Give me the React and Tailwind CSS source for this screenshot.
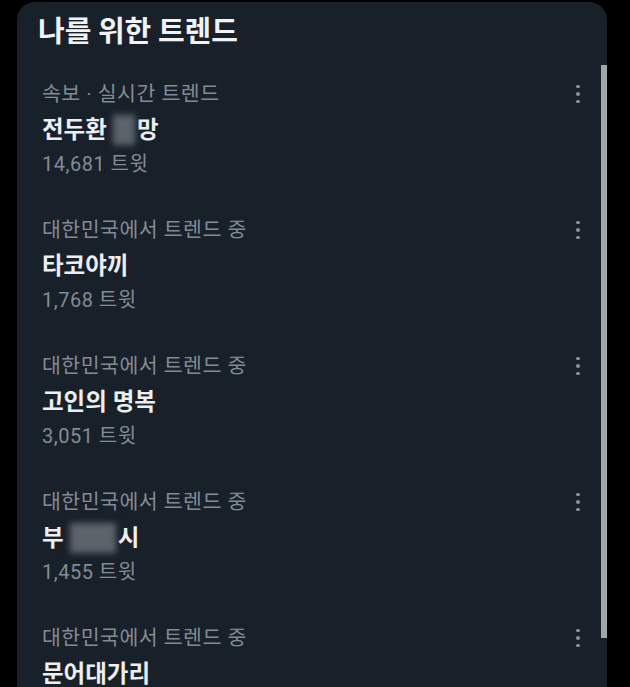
import React from 'react';

const trends = [
  { category: '속보 · 실시간 트렌드', name: ['전두환', { blur: 22 }, '망'], count: '14,681 트윗' },
  { category: '대한민국에서 트렌드 중', name: ['타코야끼'], count: '1,768 트윗' },
  { category: '대한민국에서 트렌드 중', name: ['고인의 명복'], count: '3,051 트윗' },
  { category: '대한민국에서 트렌드 중', name: ['부', { blur: 46 }, '시'], count: '1,455 트윗' },
  { category: '대한민국에서 트렌드 중', name: ['문어대가리'], count: '2,210 트윗' },
];

const Dots = () => (
  <div className="flex flex-col gap-[4px] w-[4px] items-center">
    <span className="block w-[3.5px] h-[3.5px] rounded-full bg-[#8a939c]" />
    <span className="block w-[3.5px] h-[3.5px] rounded-full bg-[#8a939c]" />
    <span className="block w-[3.5px] h-[3.5px] rounded-full bg-[#8a939c]" />
  </div>
);

const TrendItem = ({ trend }) => (
  <div className="pt-[35px] pb-[7px]">
    <div className="flex items-center justify-between h-[24px]">
      <span className="text-[20.5px] leading-[24px] tracking-[0.5px] text-[#838c95]">{trend.category}</span>
      <Dots />
    </div>
    <div className="mt-[10px] h-[28px] flex items-center text-[23.5px] leading-[28px] font-bold text-[#eceef0]">
      {trend.name.map((part, i) =>
        typeof part === 'string' ? (
          <span key={i}>{part}</span>
        ) : (
          <span
            key={i}
            className="inline-block h-[30px] bg-[#5d636b] blur-[3px] ml-[6px] mr-[2px]"
            style={{ width: part.blur }}
          />
        )
      )}
    </div>
    <div className="mt-[8px] text-[20px] leading-[24px] tracking-[0.5px] text-[#838c95]">{trend.count}</div>
  </div>
);

export default function App() {
  return (
    <div
      className="w-[630px] h-[687px] bg-black overflow-hidden"
      style={{ fontFamily: 'Roboto, "Noto Sans CJK KR", sans-serif' }}
    >
      <div className="relative ml-[17px] mt-[2px] w-[590px] h-[700px] bg-[#18202a] rounded-t-[18px]">
        <h1
          className="pt-[9px] pl-[21px] text-[29px] leading-[36px] font-bold text-[#f0f2f4]"
          style={{ fontFamily: '"Noto Sans CJK KR", sans-serif' }}
        >
          나를 위한 트렌드
        </h1>
        <div className="pl-[25px] pr-[27px]">
          {trends.map((t, i) => (
            <TrendItem key={i} trend={t} />
          ))}
        </div>
        {/* scrollbar */}
        <div className="absolute right-0 top-[63px] w-[6px] h-[573px] bg-[#a1a6ab]" />
      </div>
    </div>
  );
}
